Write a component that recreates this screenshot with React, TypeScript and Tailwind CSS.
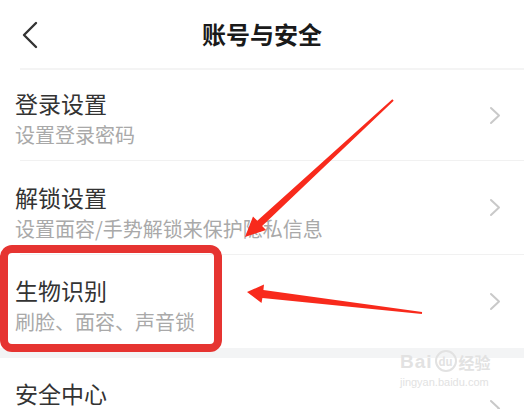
const rows = [
  { title: '登录设置', sub: '设置登录密码', h: 'h-[90px]', pt: 'pt-[18px]' },
  { title: '解锁设置', sub: '设置面容/手势解锁来保护隐私信息', h: 'h-[93px]', pt: 'pt-[21px]' },
  { title: '生物识别', sub: '刷脸、面容、声音锁', h: 'h-[93px]', pt: 'pt-[20px]' },
];

function Chevron() {
  return (
    <svg width="14" height="19" viewBox="0 0 14 19" className="shrink-0">
      <path d="M3 2l8 7.5L3 17" fill="none" stroke="#c9c9c9" strokeWidth="2" strokeLinecap="round" strokeLinejoin="round" />
    </svg>
  );
}

function Row({ title, sub, h, pt }: { title: string; sub?: string; h: string; pt: string }) {
  return (
    <div className={`flex ${h} items-center justify-between pl-[15px] pr-[22px]`}>
      <div className={`flex flex-col self-start ${pt}`}>
        <span className="text-[23px] leading-[30px] text-[#333]">{title}</span>
        {sub && <span className="mt-[4px] text-[20px] leading-[26px] text-[#a9a9a9]">{sub}</span>}
      </div>
      <Chevron />
    </div>
  );
}

export default function App() {
  return (
    <div
      className="relative h-[409px] w-[524px] overflow-hidden bg-white"
      style={{ fontFamily: '"Noto Sans CJK SC", "Noto Sans", sans-serif' }}
    >
      <header className="relative flex h-[68px] items-center justify-center">
        <svg width="18" height="28" viewBox="0 0 18 28" className="absolute left-[21px] top-[21px]">
          <path d="M15 2L3 14l12 12" fill="none" stroke="#333" strokeWidth="2.4" strokeLinecap="round" strokeLinejoin="round" />
        </svg>
        <h1 className="text-[24px] font-bold leading-none text-[#1a1a1a]">账号与安全</h1>
      </header>
      <div className="ml-[20px] h-[2px] bg-[#f4f4f4]" />

      <Row {...rows[0]} />
      <div className="ml-[20px] h-px bg-[#f1f1f1]" />
      <Row {...rows[1]} />
      <div className="ml-[20px] h-px bg-[#f1f1f1]" />
      <Row {...rows[2]} />
      <div className="h-[10px] bg-[#f3f4f5]" />
      <Row title="安全中心" h="h-[100px]" pt="pt-[20px]" />

      {/* annotation: highlight box */}
      <div className="absolute left-0 top-[245px] h-[107px] w-[222px] rounded-[12px] border-[8px] border-[#e63431]" />

      {/* annotation: arrows */}
      <svg className="pointer-events-none absolute inset-0" width="524" height="409" viewBox="0 0 524 409">
        <polygon
          points="245,237 266,230 262.1,226 393.7,100.7 392.3,99.3 257.3,220.8 253,216.5"
          fill="#f82a1c"
        />
        <polygon
          points="247,292 264,284.5 263.4,289.9 422.1,312 421.9,314 262.4,297.9 261.5,303"
          fill="#f82a1c"
        />
      </svg>

      {/* watermark */}
      <div className="pointer-events-none absolute left-[400px] top-[350px] flex flex-col text-[#e2e2e2]">
        <div className="flex items-end gap-[2px]">
          <span className="text-[19px] font-bold leading-[20px] tracking-[1px]" style={{ fontFamily: '"Liberation Sans", sans-serif' }}>
            Bai
          </span>
          <span className="flex h-[22px] w-[22px] items-center justify-center rounded-full border-2 border-[#e2e2e2] text-[11px] font-bold leading-none">
            du
          </span>
          <span className="text-[16px] font-bold leading-[20px]">经验</span>
        </div>
        <span className="mt-[4px] text-[11px] leading-[12px]" style={{ fontFamily: '"Liberation Sans", sans-serif' }}>
          jingyan.baidu.com
        </span>
      </div>
    </div>
  );
}
